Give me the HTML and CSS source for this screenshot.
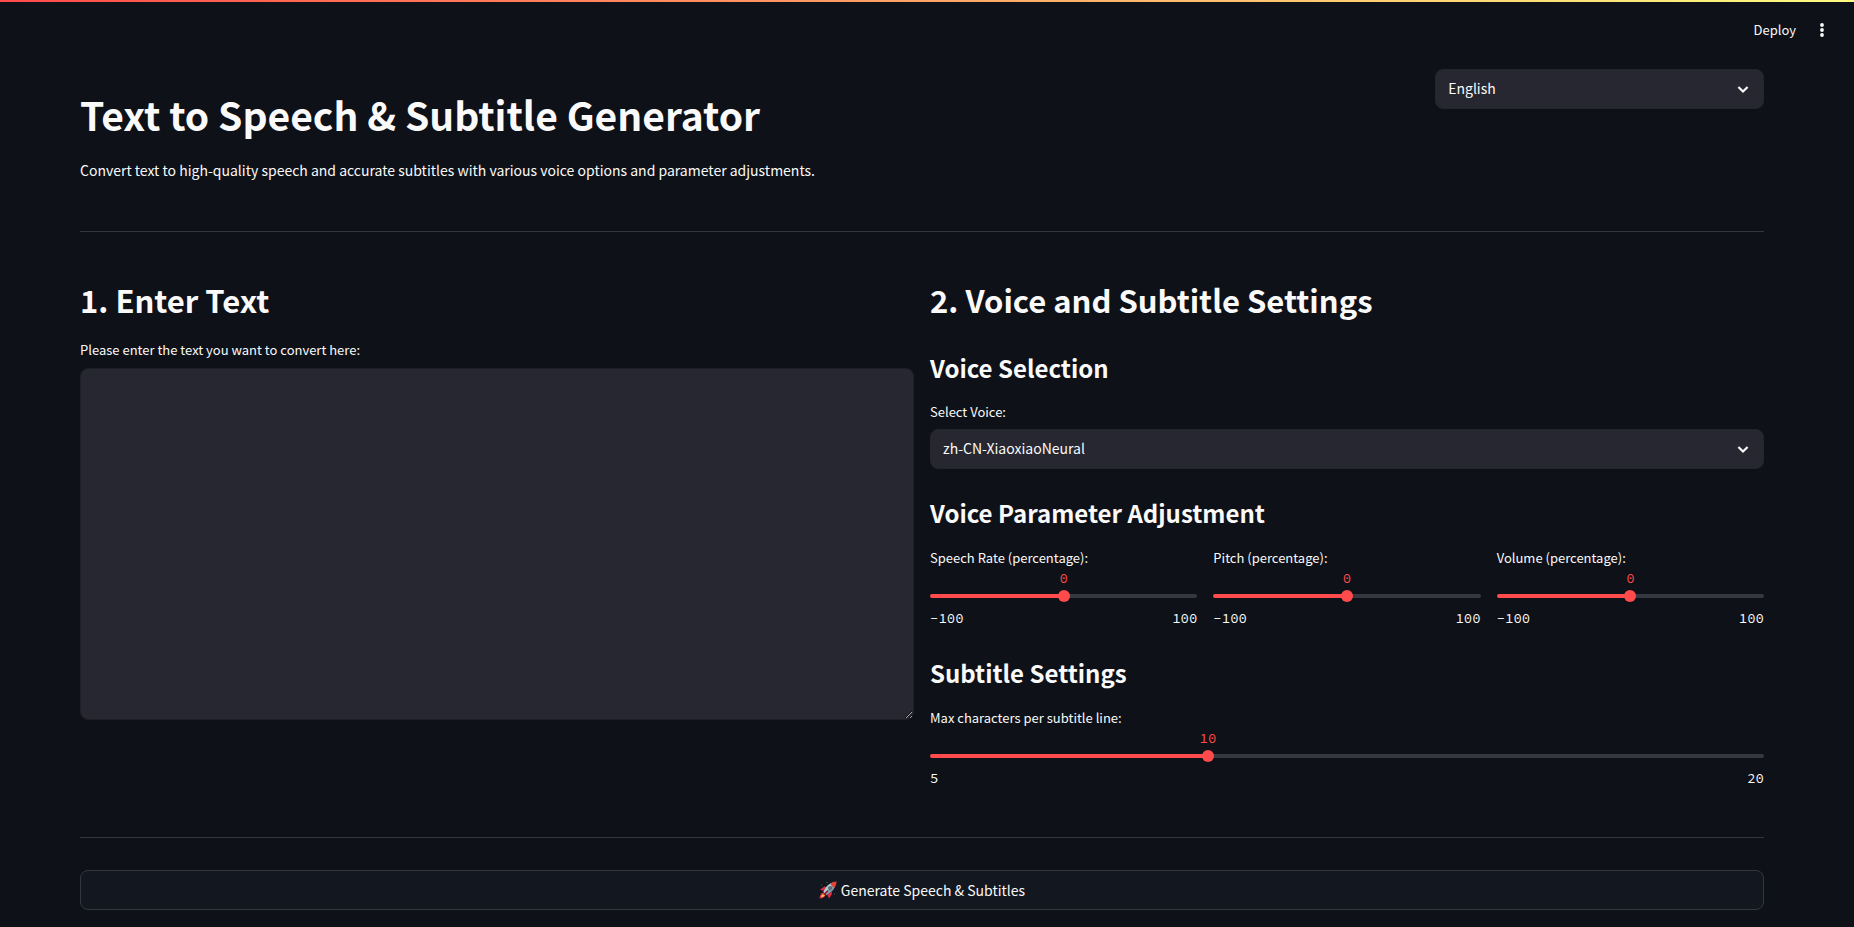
FILE: index.html
```
<!DOCTYPE html>
<html lang="en">
<head>
<meta charset="utf-8">
<title>Text to Speech &amp; Subtitle Generator</title>
<link rel="stylesheet" href="styles.css">
</head>
<body>
<div class="decoration"></div>
<header class="toolbar">
  <button class="deploy" type="button">Deploy</button>
  <button class="menu" type="button" aria-label="Main menu">
    <svg viewBox="0 0 20 20" width="20" height="20" fill="currentColor" aria-hidden="true"><circle cx="10" cy="5" r="1.9"/><circle cx="10" cy="10" r="1.9"/><circle cx="10" cy="15" r="1.9"/></svg>
  </button>
</header>
<main class="page">
  <div class="intro">
    <div class="intro-text">
      <h1>Text to Speech &amp; Subtitle Generator</h1>
      <p>Convert text to high-quality speech and accurate subtitles with various voice options and parameter adjustments.</p>
    </div>
    <div class="intro-language">
      <div class="select">
        <select aria-label="Language"><option>English</option></select>
        <svg class="chevron" viewBox="0 0 24 24" aria-hidden="true"><path d="M6.500 9.500l5.500 5.500 5.500-5.500"/></svg>
      </div>
    </div>
  </div>
  <hr>
  <div class="columns">
    <section class="column">
      <h2>1. Enter Text</h2>
      <label class="label" for="text">Please enter the text you want to convert here:</label>
      <textarea id="text" class="textarea"></textarea>
    </section>
    <section class="column">
      <h2>2. Voice and Subtitle Settings</h2>
      <h3 class="first">Voice Selection</h3>
      <label class="label" for="voice">Select Voice:</label>
      <div class="select">
        <select id="voice"><option>zh-CN-XiaoxiaoNeural</option></select>
        <svg class="chevron" viewBox="0 0 24 24" aria-hidden="true"><path d="M6.500 9.500l5.500 5.500 5.500-5.500"/></svg>
      </div>
      <h3>Voice Parameter Adjustment</h3>
      <div class="sliders">
        <div class="slider" style="--pos: 50%">
          <label for="rate">Speech Rate (percentage):</label>
          <div class="value"><output for="rate">0</output></div>
          <div class="track"><input id="rate" type="range" min="-100" max="100" value="0"></div>
          <div class="ticks"><span>−100</span><span>100</span></div>
        </div>
        <div class="slider" style="--pos: 50%">
          <label for="pitch">Pitch (percentage):</label>
          <div class="value"><output for="pitch">0</output></div>
          <div class="track"><input id="pitch" type="range" min="-100" max="100" value="0"></div>
          <div class="ticks"><span>−100</span><span>100</span></div>
        </div>
        <div class="slider" style="--pos: 50%">
          <label for="volume">Volume (percentage):</label>
          <div class="value"><output for="volume">0</output></div>
          <div class="track"><input id="volume" type="range" min="-100" max="100" value="0"></div>
          <div class="ticks"><span>−100</span><span>100</span></div>
        </div>
      </div>
      <h3 class="last">Subtitle Settings</h3>
      <div class="slider" style="--pos: 33.333%">
        <label for="chars">Max characters per subtitle line:</label>
        <div class="value"><output for="chars">10</output></div>
        <div class="track"><input id="chars" type="range" min="5" max="20" value="10"></div>
        <div class="ticks"><span>5</span><span>20</span></div>
      </div>
    </section>
  </div>
  <hr>
  <button class="generate" type="button">
    <svg class="rocket" viewBox="0 0 36 36" aria-hidden="true">
      <path fill="#a0041e" d="M3 17l9-5 5 3-8 6zM19 33l5-9-3-6-6 9z"/>
      <path fill="#dd2e44" d="M2 17l9-6 4 1-7 7zM20 35l6-9-1-5-8 7z"/>
      <path fill="#dd2e44" d="M8 23c-5 2-7 7-7 12 5 0 10-2 12-6z"/>
      <path fill="#ffcc4d" d="M9 25c-3 2-5 5-5 8 3 0 6-2 8-5z"/>
      <path fill="#7f99a6" d="M9 22C12 13 20 4 34 2c-1 14-10 22-20 26z"/>
      <path fill="#b4c8d1" d="M9 22C12 13 20 4 30 3L12 25z"/>
      <path fill="#e8412e" d="M23 5c3-2 7-4 12-4 0 5-2 9-4 12-3-1-7-4-8-8z"/>
      <circle cx="22" cy="14" r="3.6" fill="#394955"/><circle cx="22" cy="14" r="1.6" fill="#88a9b9"/>
      <path stroke="#a0041e" stroke-width="2.4" stroke-linecap="round" d="M10 27l7-7"/>
      <circle cx="16" cy="3" r="1" fill="#7d8a94"/><circle cx="5" cy="8" r="1" fill="#56616b"/><circle cx="31" cy="26" r="1" fill="#56616b"/>
    </svg>
    <span>Generate Speech &amp; Subtitles</span>
  </button>
</main>
</body>
</html>
```
FILE: styles.css
```
* { box-sizing: border-box; }

body {
  margin: 0;
  background: #0e1117;
  color: #fafafa;
  font: 400 14px/24px "Source Sans Pro", "Noto Sans CJK SC", "Noto Sans", sans-serif;
  overflow: hidden;
}

h1, h2, h3, p { margin: 0; }
h1 { font-size: 39px; line-height: 52px; font-weight: 700; }
h2 { font-size: 31px; line-height: 44px; font-weight: 600; }
h3 { margin-top: 28px; margin-bottom: 19px; font-size: 24px; line-height: 32px; font-weight: 600; }
h3.first { margin-top: 30px; margin-bottom: 18px; }
h3.last { margin-top: 29px; }

button, select, textarea { font: inherit; color: inherit; }

.decoration { height: 2px; background: linear-gradient(90deg, #ff4b4b, #fffd80); }

.toolbar {
  display: flex;
  justify-content: flex-end;
  align-items: center;
  gap: 16px;
  height: 55px;
  padding-right: 22px;
}
.toolbar button { display: flex; padding: 0; border: 0; background: none; }
.toolbar .deploy { font-size: 13px; }

.page { padding: 12px 90px 16px 80px; }

.intro { display: flex; gap: 16px; }
.intro-text { flex: 1 1 calc(80% - 16px); padding-top: 19px; }
.intro-text p { margin-top: 18px; }
.intro-language { flex: 1 1 calc(20% - 16px); }

hr { height: 1px; margin: 49px 0 46px; border: 0; background: #34363b; }

.columns { display: grid; grid-template-columns: 1fr 1fr; gap: 16px; }
.columns + hr { margin-bottom: 32px; }
.column { display: flex; flex-direction: column; }

.label, .slider label { font-size: 13px; line-height: 20px; }
.label { margin-bottom: 7px; }
h2 + .label { margin-top: 18px; margin-bottom: 8px; }

.textarea {
  height: 352px;
  padding: 12px;
  border: 1px solid #1e2028;
  border-radius: 8px;
  background: #262730;
  resize: vertical;
}

.select { display: grid; align-items: center; }
.select select {
  grid-area: 1 / 1;
  width: 100%;
  height: 40px;
  padding: 0 40px 2px 12px;
  border: 1px solid #24252d;
  border-radius: 8px;
  background: #262730;
  appearance: none;
}
.chevron {
  grid-area: 1 / 1;
  justify-self: end;
  width: 20px;
  margin-right: 11px;
  fill: none;
  stroke: #fafafa;
  stroke-width: 2.6;
  pointer-events: none;
}

.sliders { display: grid; grid-template-columns: repeat(3, 1fr); gap: 16px; }
.slider { display: flex; flex-direction: column; }
.value { position: relative; height: 20px; }
.value output {
  position: absolute;
  left: var(--pos);
  transform: translateX(-50%);
  color: #ff4b4b;
}
.value, .ticks { font: 14px/20px "Source Code Pro", "DejaVu Sans Mono", monospace; }
.track {
  display: flex;
  align-items: center;
  height: 4px;
  margin: 6px 0 10px;
  border-radius: 4px;
  background: linear-gradient(90deg, #ff4b4b var(--pos), #353840 var(--pos));
}
.track input {
  flex: 1;
  height: 12px;
  margin: 0 -6px;
  background: none;
  appearance: none;
}
.track input::-webkit-slider-thumb {
  width: 12px;
  height: 12px;
  border-radius: 50%;
  background: #ff4b4b;
  appearance: none;
}
.ticks { display: flex; justify-content: space-between; }

.generate {
  display: flex;
  justify-content: center;
  align-items: center;
  gap: 4px;
  width: 100%;
  height: 40px;
  padding-bottom: 2px;
  border: 1px solid #35373e;
  border-radius: 8px;
  background: #131720;
}
.rocket { width: 18px; height: 18px; }
```
